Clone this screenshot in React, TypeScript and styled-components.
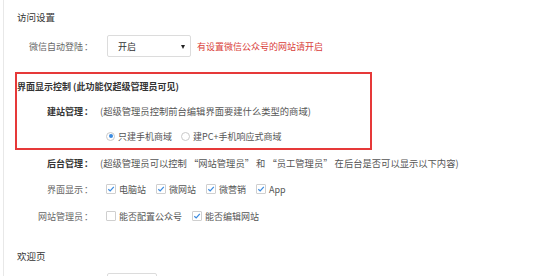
import React from 'react';
import styled, { createGlobalStyle } from 'styled-components';

const GlobalStyle = createGlobalStyle`
  html, body {
    margin: 0;
    padding: 0;
    background: #fff;
  }
  body {
    font-family: "Noto Sans CJK SC", "Noto Sans", sans-serif;
    font-size: 9px;
    color: #555;
  }
`;

const Page = styled.div`
  width: 551px;
  height: 276px;
  margin-left: 3px;
  border-left: 1px solid #e8e8e8;
  padding: 7px 0 0 11px;
  box-sizing: border-box;
  overflow: hidden;
  display: flex;
  flex-direction: column;
  & > * {
    flex-shrink: 0;
  }
`;

const SectionTitle = styled.div<{ $mt?: number }>`
  height: 20px;
  line-height: 20px;
  padding-left: 2px;
  margin-top: ${(p) => p.$mt ?? 0}px;
  font-size: 9.5px;
  color: #333;
`;

const Row = styled.div<{ $mt: number; $h?: number }>`
  display: flex;
  align-items: center;
  flex-shrink: 0;
  height: ${(p) => p.$h ?? 16}px;
  margin-top: ${(p) => p.$mt}px;
  white-space: nowrap;
`;

const Label = styled.div<{ $w?: number; $strong?: boolean }>`
  flex: none;
  width: ${(p) => p.$w ?? 78}px;
  text-align: right;
  color: ${(p) => (p.$strong ? '#333' : '#666')};
  font-weight: ${(p) => (p.$strong ? 700 : 400)};
`;

const Colon = styled.span`
  margin-left: 1px;
`;

const Hint = styled.div`
  padding-left: 7px;
  font-size: 9.3px;
  color: #555;
`;

const Controls = styled.div<{ $gap?: number }>`
  display: flex;
  align-items: center;
  padding-left: 13px;
  gap: ${(p) => p.$gap ?? 9}px;
`;

const Select = styled.div`
  position: relative;
  width: 84px;
  height: 22px;
  margin-left: 14px;
  box-sizing: border-box;
  border: 1px solid #dcdcdc;
  border-radius: 2px;
  padding-left: 10px;
  display: flex;
  align-items: center;
  color: #333;
`;

const Caret = styled.span`
  position: absolute;
  right: 5px;
  top: 9px;
  width: 0;
  height: 0;
  border-left: 2.5px solid transparent;
  border-right: 2.5px solid transparent;
  border-top: 4px solid #222;
`;

const Warn = styled.span`
  margin-left: 6px;
  color: #d9403a;
`;

const AdminBox = styled.div`
  margin-top: 15px;
  width: 357px;
  height: 78px;
  box-sizing: border-box;
  border: 2px solid #e63939;
  padding-top: 5px;
  display: flex;
  flex-direction: column;
`;

const BoxTitle = styled.div`
  height: 16px;
  line-height: 16px;
  font-weight: 700;
  color: #333;
`;

const Choice = styled.label`
  display: flex;
  align-items: center;
  gap: 3px;
  color: #555;
`;

const RadioDot = styled.span<{ $on?: boolean }>`
  width: 9px;
  height: 9px;
  box-sizing: border-box;
  border-radius: 50%;
  border: 1px solid #c9c9c9;
  display: flex;
  align-items: center;
  justify-content: center;
  &::after {
    content: '';
    width: 4px;
    height: 4px;
    border-radius: 50%;
    background: ${(p) => (p.$on ? '#3b8be0' : 'transparent')};
  }
`;

const CheckBox = styled.span`
  width: 10px;
  height: 10px;
  box-sizing: border-box;
  border: 1px solid #cfcfcf;
  border-radius: 1px;
  display: flex;
  align-items: center;
  justify-content: center;
  background: #fff;
`;

const InputStub = styled.div`
  margin-top: 7px;
  margin-left: 92px;
  width: 50px;
  height: 20px;
  box-sizing: border-box;
  border: 1px solid #dcdcdc;
  border-radius: 2px;
`;

const Check: React.FC<{ on?: boolean; text: string }> = ({ on, text }) => (
  <Choice>
    <CheckBox>
      {on && (
        <svg width="8" height="8" viewBox="0 0 8 8">
          <polyline points="1.3,4.2 3.2,6 6.8,1.8" fill="none" stroke="#3b8be0" strokeWidth="1.2" />
        </svg>
      )}
    </CheckBox>
    {text}
  </Choice>
);

const Radio: React.FC<{ on?: boolean; text: string }> = ({ on, text }) => (
  <Choice>
    <RadioDot $on={on} />
    {text}
  </Choice>
);

const App: React.FC = () => (
  <>
    <GlobalStyle />
    <Page>
      <SectionTitle>访问设置</SectionTitle>
      <Row $mt={8} $h={22}>
        <Label>
          微信自动登陆<Colon>：</Colon>
        </Label>
        <Select>
          开启
          <Caret />
        </Select>
        <Warn>有设置微信公众号的网站请开启</Warn>
      </Row>

      <AdminBox>
        <BoxTitle>界面显示控制 (此功能仅超级管理员可见)</BoxTitle>
        <Row $mt={8}>
          <Label $w={76} $strong>
            建站管理<Colon>：</Colon>
          </Label>
          <Hint>(超级管理员控制前台编辑界面要建什么类型的商域)</Hint>
        </Row>
        <Row $mt={9}>
          <Label $w={76} />
          <Controls>
            <Radio on text="只建手机商域" />
            <Radio text="建PC+手机响应式商域" />
          </Controls>
        </Row>
      </AdminBox>

      <Row $mt={5}>
        <Label $strong>
          后台管理<Colon>：</Colon>
        </Label>
        <Hint>(超级管理员可以控制 “网站管理员” 和 “员工管理员” 在后台是否可以显示以下内容)</Hint>
      </Row>
      <Row $mt={10}>
        <Label>
          界面显示<Colon>：</Colon>
        </Label>
        <Controls $gap={10}>
          <Check on text="电脑站" />
          <Check on text="微网站" />
          <Check on text="微营销" />
          <Check on text="App" />
        </Controls>
      </Row>
      <Row $mt={11}>
        <Label>
          网站管理员<Colon>：</Colon>
        </Label>
        <Controls $gap={10}>
          <Check text="能否配置公众号" />
          <Check on text="能否编辑网站" />
        </Controls>
      </Row>

      <SectionTitle $mt={22}>欢迎页</SectionTitle>
      <InputStub />
    </Page>
  </>
);

export default App;
